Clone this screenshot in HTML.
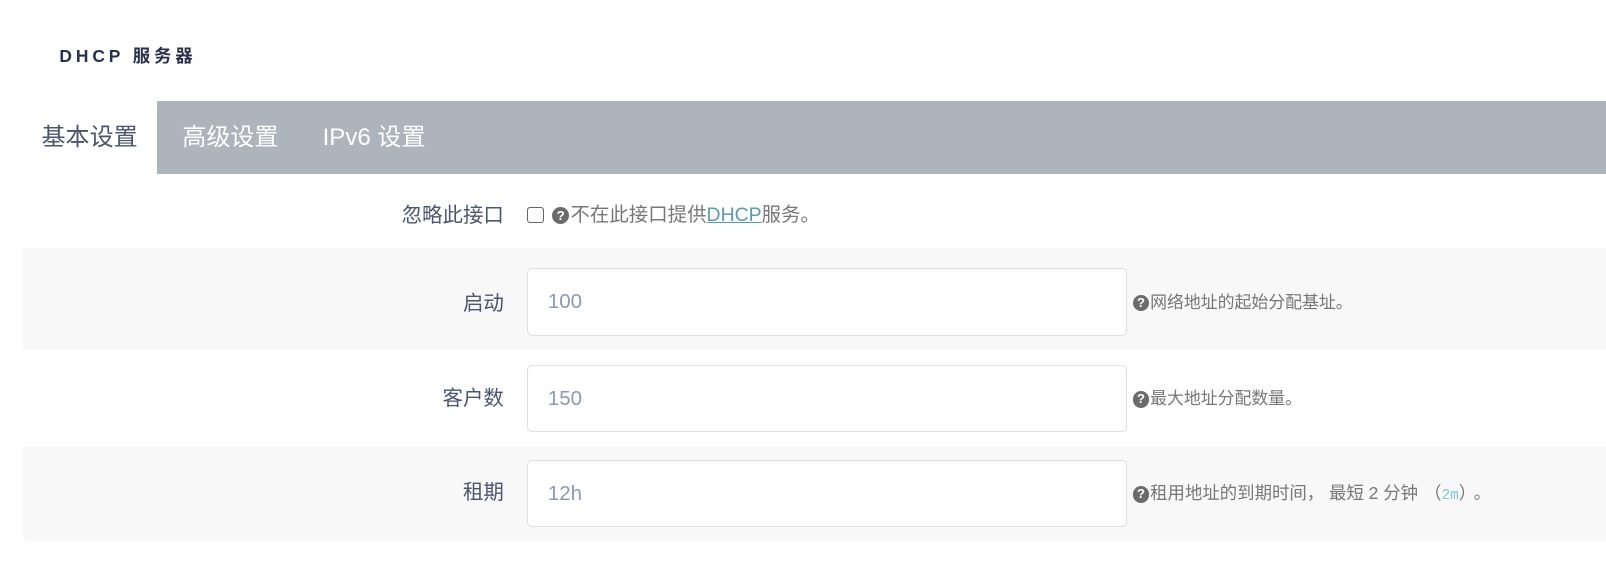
<!DOCTYPE html>
<html><head><meta charset="utf-8"><style>
*{box-sizing:border-box;margin:0;padding:0}
body{width:1606px;height:562px;background:#fff;font-family:"Liberation Sans","Noto Sans CJK SC",sans-serif;overflow:hidden}
.w{position:relative;width:1568px;height:549px;zoom:1.0242}
.h{position:absolute;left:58px;top:42px;font-size:17px;font-weight:bold;letter-spacing:3.8px;color:#2a2f4a}
.tabs{position:absolute;left:153px;top:99px;width:1415px;height:71px;background:#adb4bb}
.tab{position:absolute;top:0;height:71px;line-height:72px;font-size:23.5px;color:#fff}
.tab.a{position:absolute;left:22px;top:99px;width:131px;background:#fff;color:#4a5570;border-radius:6px 0 0 0;text-align:center}
.row{position:absolute;left:22px;width:1546px}
.g{background:#f8f8f8}
.lbl{position:absolute;right:1076px;font-size:20px;color:#4a5570;text-align:right;white-space:nowrap;line-height:24px}
.inp{position:absolute;left:493px;width:585px;height:66px;background:#fff;border:1px solid #dcdfe3;border-radius:5px;font-size:20px;color:#8a9bb0;padding-left:19px;line-height:64px}
.help{position:absolute;left:1084px;font-size:16.5px;color:#777;white-space:nowrap;line-height:22px}
.q{display:inline-block;width:16px;height:16px;border-radius:50%;background:#6b6b6b;color:#fff;font-size:13px;font-weight:bold;line-height:16px;text-align:center;vertical-align:1px;margin-right:1px}
</style></head><body><div class="w">
<div class="h">DHCP 服务器</div>
<div class="tab a">基本设置</div>
<div class="tabs">
<div class="tab" style="left:25px">高级设置</div>
<div class="tab" style="left:162px">IPv6 设置</div>
</div>
<div class="row" style="top:170px;height:72px">
<div class="lbl" style="top:29px">忽略此接口</div>
<div style="position:absolute;left:493px;top:32px;width:16px;height:16px;border:1.5px solid #666;border-radius:3px"></div>
<div class="help" style="left:517px;top:29px;font-size:19px"><span class="q" style="width:17px;height:17px;line-height:17px">?</span>不在此接口提供<span style="color:#5a9bb0;text-decoration:underline">DHCP</span>服务。</div>
</div>
<div class="row g" style="top:242px;height:100px">
<div class="lbl" style="top:43px">启动</div>
<div class="inp" style="top:20px">100</div>
<div class="help" style="top:43px"><span class="q">?</span>网络地址的起始分配基址。</div>
</div>
<div class="row" style="top:342px;height:94px">
<div class="lbl" style="top:36px">客户数</div>
<div class="inp" style="top:14px">150</div>
<div class="help" style="top:37px"><span class="q">?</span>最大地址分配数量。</div>
</div>
<div class="row g" style="top:436px;height:92px;border-radius:0 0 0 6px">
<div class="lbl" style="top:34px">租期</div>
<div class="inp" style="top:13px">12h</div>
<div class="help" style="top:35px;font-size:17px"><span class="q">?</span>租用地址的到期时间，&nbsp;最短 2 分钟<span style="margin-left:6px">（</span><span style="color:#7ec6e0;font-family:'Liberation Mono',monospace;font-size:14px">2m</span><span style="margin-right:6px">）</span>。</div>
</div>
</div></body></html>
